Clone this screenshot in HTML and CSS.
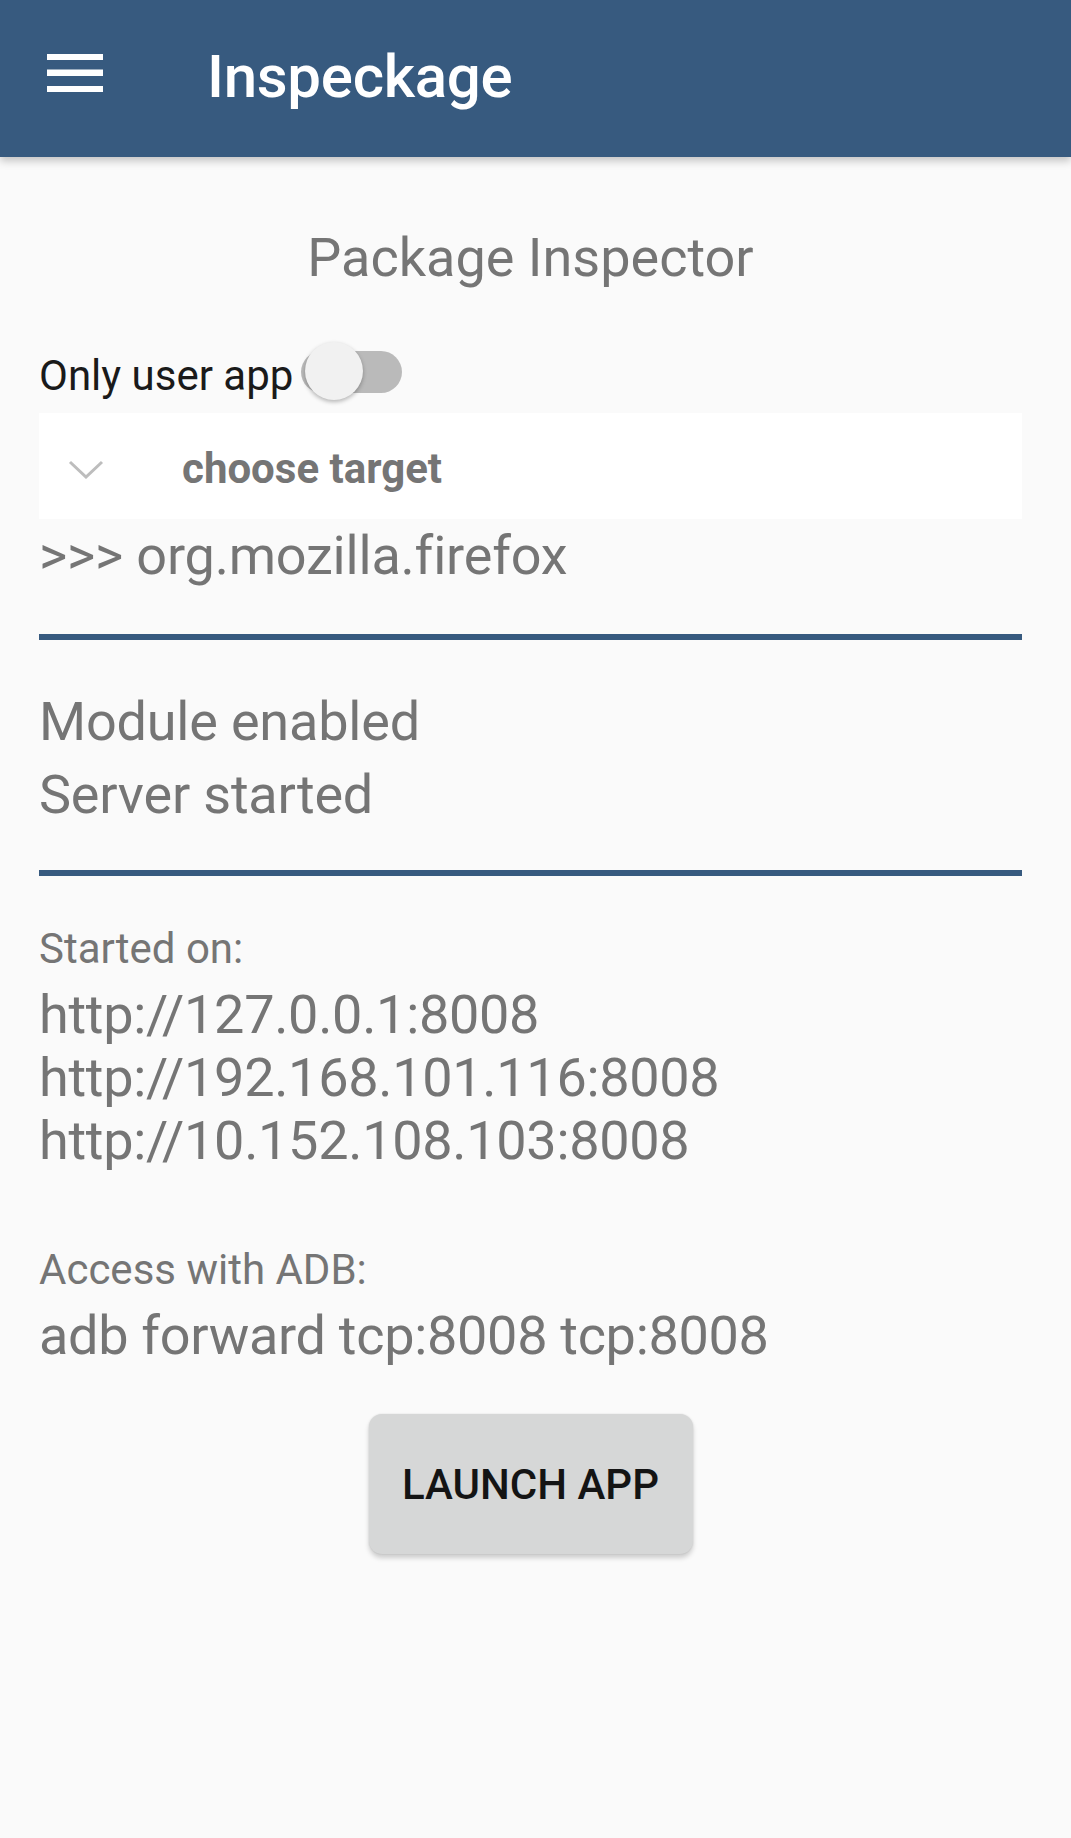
FILE: index.html
```html
<!DOCTYPE html>
<html lang="en">
<head>
    <meta charset="UTF-8">
    <meta name="viewport" content="width=device-width, initial-scale=1.0">
    <title>Inspeckage</title>
    <link rel="stylesheet" href="styles.css">
</head>
<body>
    <header class="toolbar">
        <svg class="menu-icon" width="56" height="38" viewBox="0 0 56 38" aria-hidden="true">
            <rect x="0" y="0" width="56" height="6" fill="#fff"/>
            <rect x="0" y="15.5" width="56" height="6.5" fill="#fff"/>
            <rect x="0" y="32" width="56" height="6" fill="#fff"/>
        </svg>
        <h1 class="toolbar-title">Inspeckage</h1>
    </header>

    <main class="content">
        <h2 class="page-title">Package Inspector</h2>

        <div class="user-row">
            <span class="user-label">Only user app</span>
            <div class="switch">
                <div class="switch-track"></div>
                <div class="switch-thumb"></div>
            </div>
        </div>

        <div class="spinner">
            <svg class="spinner-arrow" width="36" height="19" viewBox="0 0 36 19" aria-hidden="true">
                <polyline points="2,2 18,17 34,2" fill="none" stroke="#bdbdbd" stroke-width="3"/>
            </svg>
            <span class="spinner-text">choose target</span>
        </div>

        <div class="target">&gt;&gt;&gt; org.mozilla.firefox</div>
        <hr class="divider divider-first">

        <div class="status">
            <div class="status-line">Module enabled</div>
            <div class="status-line">Server started</div>
        </div>
        <hr class="divider divider-second">

        <div class="label label-started">Started on:</div>
        <div class="urls">
            <div>http://127.0.0.1:8008</div>
            <div>http://192.168.101.116:8008</div>
            <div>http://10.152.108.103:8008</div>
        </div>

        <div class="label label-adb">Access with ADB:</div>
        <div class="adb">adb forward tcp:8008 tcp:8008</div>

        <div class="actions">
            <button class="launch-btn">LAUNCH APP</button>
        </div>
    </main>
</body>
</html>
```

FILE: styles.css
```css
html, body {
    margin: 0;
    padding: 0;
    background: #fafafa;
    font-family: Roboto, "Noto Sans", sans-serif;
}

.toolbar {
    height: 157px;
    background: #375a7f;
    display: flex;
    align-items: center;
    padding-left: 47px;
    box-shadow: 0 4px 8px rgba(0, 0, 0, 0.22);
    position: relative;
    z-index: 2;
}

.menu-icon {
    align-self: flex-start;
    margin-top: 54px;
    flex-shrink: 0;
}

.toolbar-title {
    margin: -4px 0 0 104px;
    font-size: 60px;
    font-weight: 500;
    line-height: 157px;
    letter-spacing: -0.3px;
    color: #fff;
}

.content {
    padding: 0 49px 80px 39px;
}

.page-title {
    margin: 69px 0 0;
    font-size: 54px;
    font-weight: 400;
    line-height: 63px;
    text-align: center;
    color: #757575;
}

.user-row {
    margin-top: 53px;
    height: 60px;
    display: flex;
    align-items: center;
}

.user-label {
    padding-top: 6px;
    font-size: 42px;
    line-height: 49px;
    color: #1a1a1a;
}

/* switch, off state */
.switch {
    position: relative;
    width: 101px;
    height: 60px;
    margin-left: 8px;
}

.switch-track {
    position: absolute;
    top: 9px;
    left: 0;
    width: 101px;
    height: 42px;
    border-radius: 21px;
    background: #bababa;
}

.switch-thumb {
    position: absolute;
    top: 0;
    left: 4px;
    width: 58px;
    height: 58px;
    border-radius: 50%;
    background: #f1f1f1;
    box-shadow: 0 2px 4px rgba(0, 0, 0, 0.28);
}

.spinner {
    margin-top: 11px;
    height: 106px;
    background: #fff;
    display: flex;
    align-items: center;
}

.spinner-arrow {
    margin-left: 29px;
    margin-top: 6px;
    flex-shrink: 0;
}

.spinner-text {
    margin-left: 78px;
    padding-top: 4px;
    font-size: 42px;
    font-weight: 700;
    line-height: 49px;
    color: #757575;
}

.target {
    margin-top: 5px;
    font-size: 54px;
    line-height: 63px;
    letter-spacing: -0.2px;
    color: #757575;
}

.divider {
    margin: 0;
    height: 6px;
    border: none;
    background: #375a7f;
}

.divider-first {
    margin-top: 47px;
}

.status {
    margin-top: 45px;
}

.status-line {
    font-size: 54px;
    line-height: 73px;
    letter-spacing: -0.2px;
    color: #757575;
}

.divider-second {
    margin-top: 39px;
}

.label {
    font-size: 42px;
    line-height: 49px;
    color: #757575;
}

.label-started {
    margin-top: 48px;
}

.urls {
    margin-top: 10px;
    font-size: 54px;
    line-height: 63px;
    letter-spacing: -0.3px;
    color: #757575;
}

.label-adb {
    margin-top: 73px;
}

.adb {
    margin-top: 10px;
    font-size: 54px;
    line-height: 63px;
    letter-spacing: -0.3px;
    color: #757575;
}

.actions {
    display: flex;
    justify-content: center;
    margin-top: 47px;
}

.launch-btn {
    width: 324px;
    height: 140px;
    border: none;
    border-radius: 13px;
    background: #d6d7d7;
    box-shadow: 0 4px 5px rgba(0, 0, 0, 0.18), 0 0 2px rgba(0, 0, 0, 0.12);
    font-family: Roboto, "Noto Sans", sans-serif;
    font-size: 42px;
    font-weight: 500;
    line-height: 49px;
    color: #141414;
    padding: 0;
    cursor: pointer;
}
```
